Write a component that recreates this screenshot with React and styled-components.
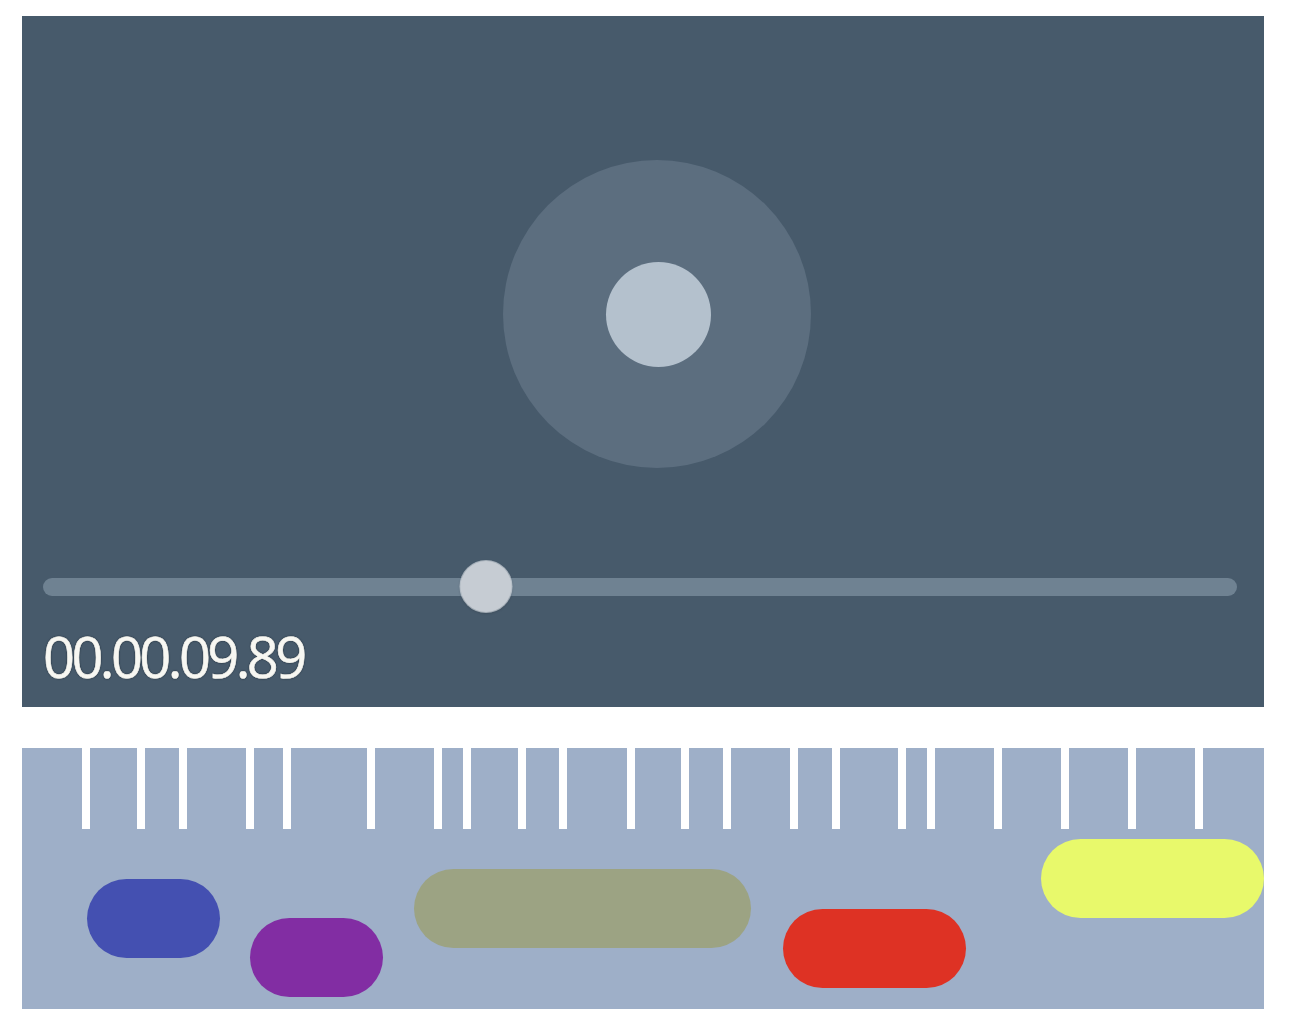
import React from 'react';
import styled, { createGlobalStyle } from 'styled-components';

const GlobalStyle = createGlobalStyle`
    html, body {
        margin: 0;
        padding: 0;
        background: #ffffff;
    }
    body {
        font-family: 'Open Sans', 'Noto Sans', sans-serif;
    }
`;

const Page = styled.div`
    display: flex;
    flex-direction: column;
    gap: 41px;
    padding: 16px 0 0 22px;
    width: 1242px;
`;

const Player = styled.div`
    display: flex;
    flex-direction: column;
    height: 691px;
    background-color: #475a6b;
`;

const Stage = styled.div`
    height: 545px;
    display: flex;
    justify-content: center;
    align-items: flex-start;
    padding: 144px 0 0 28px;
    box-sizing: border-box;
`;

const OuterDisc = styled.div`
    width: 308px;
    height: 308px;
    border-radius: 50%;
    background: #5c6e7f;
    display: flex;
    align-items: center;
    justify-content: center;
`;

const InnerDisc = styled.div`
    width: 105px;
    height: 105px;
    border-radius: 50%;
    background: #b4c1cd;
    margin-left: 2px;
`;

const SliderRow = styled.div`
    position: relative;
    height: 52px;
    margin: 0 27px 0 21px;
    display: flex;
    align-items: center;
`;

const Track = styled.div`
    width: 100%;
    height: 18px;
    border-radius: 9px;
    background: #6f8292;
`;

const Thumb = styled.div`
    position: absolute;
    top: 0;
    width: 51px;
    height: 51px;
    border-radius: 50%;
    background: #c6ccd3;
    box-shadow: 0 0 0 1px rgba(230, 235, 240, 0.6), 0 1px 3px rgba(0, 0, 0, 0.25);
    transform: translateX(-50%);
`;

const TimeLabel = styled.div`
    margin: 15px 0 0 21px;
    font-family: 'Open Sans', 'Noto Sans', sans-serif;
    font-size: 56px;
    line-height: 56px;
    letter-spacing: -3.6px;
    color: #f7f7f2;
    -webkit-text-stroke: 0.6px #f7f7f2;
    text-shadow: 0 0 2px rgba(20, 30, 40, 0.9), 0 0 1px rgba(20, 30, 40, 0.9);
`;

const Timeline = styled.div`
    position: relative;
    height: 261px;
    background: #9eafc8;
    overflow: hidden;
`;

const Tick = styled.div`
    position: absolute;
    top: 0;
    width: 8px;
    height: 81px;
    background: #ffffff;
`;

const Clip = styled.div`
    position: absolute;
    height: 79px;
    border-radius: 40px;
    background: ${props => props.$color};
`;

const ticks = [60, 115, 157, 224, 261, 345, 412, 441, 496, 537, 605, 659, 701, 768, 810, 876, 905, 972, 1039, 1106, 1173];

const clips = [
    { left: 65, top: 131, width: 133, color: '#4450b1' },
    { left: 228, top: 170, width: 133, color: '#822da3' },
    { left: 392, top: 121, width: 337, color: '#9ca383' },
    { left: 761, top: 161, width: 183, color: '#de3224' },
    { left: 1019, top: 91, width: 223, color: '#e8f96b' },
];

const progress = 443 / 1194;

const App = () => (
    <>
        <GlobalStyle />
        <Page>
            <Player>
                <Stage>
                    <OuterDisc>
                        <InnerDisc />
                    </OuterDisc>
                </Stage>
                <SliderRow>
                    <Track />
                    <Thumb style={{ left: `${progress * 100}%` }} />
                </SliderRow>
                <TimeLabel>00.00.09.89</TimeLabel>
            </Player>
            <Timeline>
                {ticks.map((x, i) => (
                    <Tick key={i} style={{ left: x }} />
                ))}
                {clips.map((c, i) => (
                    <Clip key={i} $color={c.color} style={{ left: c.left, top: c.top, width: c.width }} />
                ))}
            </Timeline>
        </Page>
    </>
);

export default App;
